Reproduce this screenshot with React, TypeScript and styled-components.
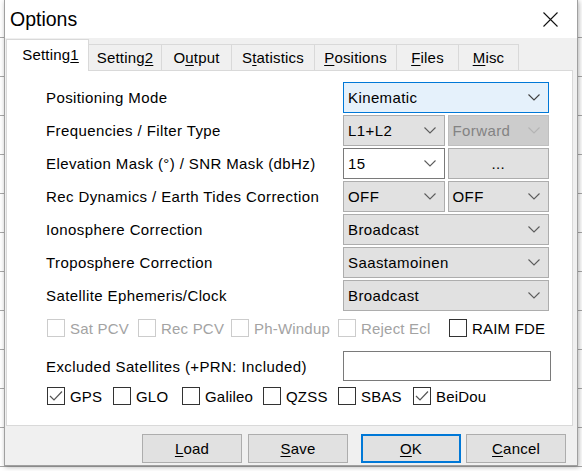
import React from "react";
import styled, { createGlobalStyle, css } from "styled-components";

const GlobalStyle = createGlobalStyle`
  html, body {
    margin: 0;
    padding: 0;
  }
  body {
    width: 582px;
    height: 471px;
    overflow: hidden;
    background: repeating-linear-gradient(to bottom, #ffffff 0 37px, #a8a8a8 37px 38px, #ffffff 38px 39px);
    font-family: "Liberation Sans", Arial, sans-serif;
    color: #000;
  }
`;

const Screen = styled.div`
  padding-left: 4px;
`;

const Dialog = styled.div`
  width: 574px;
  height: 466px;
  box-sizing: border-box;
  display: flex;
  flex-direction: column;
  background: #f0f0f0;
  border: 1px solid #a0a0a0;
  border-top: none;
  box-shadow: 1px 1px 5px rgba(0, 0, 0, 0.3);
`;

const TitleBar = styled.div`
  height: 38px;
  flex: none;
  display: flex;
  align-items: center;
  justify-content: space-between;
  padding: 0 19px 0 5px;
  background: #ffffff;
`;

const Title = styled.div`
  font-size: 19.5px;
`;

const Body = styled.div`
  flex: 1;
  display: flex;
  flex-direction: column;
  padding: 0 4px 0 1px;
  font-size: 15px;
  letter-spacing: 0.4px;
`;

const TabStrip = styled.div`
  height: 32px;
  flex: none;
  display: flex;
  align-items: flex-end;
  position: relative;
  z-index: 1;
  letter-spacing: 0.2px;
`;

const Tab = styled.div<{ $active?: boolean; $w: number }>`
  width: ${(p) => p.$w}px;
  height: 26px;
  box-sizing: border-box;
  display: flex;
  align-items: center;
  justify-content: center;
  background: #f0f0f0;
  border: 1px solid #d9d9d9;
  border-bottom: none;
  margin-left: -1px;
  ${(p) =>
    p.$active &&
    css`
      height: 32px;
      background: #ffffff;
      margin-bottom: -1px;
      margin-left: 0;
      padding-left: 6px;
      align-items: flex-start;
      padding-top: 6px;
    `}
`;

const Key = styled.span`
  text-decoration: underline;
  text-underline-offset: 2px;
`;

const Panel = styled.div`
  height: 356px;
  flex: none;
  box-sizing: border-box;
  background: #ffffff;
  border: 1px solid #d9d9d9;
  padding: 11px 0 0 39px;
  display: flex;
  flex-direction: column;
`;

const Rows = styled.div`
  display: flex;
  flex-direction: column;
  gap: 2px;
`;

const Row = styled.div<{ $h?: number; $top?: number }>`
  height: ${(p) => p.$h ?? 31}px;
  margin-top: ${(p) => p.$top ?? 0}px;
  display: flex;
  align-items: center;
`;

const Label = styled.div`
  width: 297px;
  white-space: nowrap;
`;

const Controls = styled.div`
  width: 206px;
  height: 100%;
  display: grid;
  grid-auto-flow: column;
  grid-auto-columns: 1fr;
  gap: 3px;
`;

type ComboKind = "focus" | "normal" | "disabled" | "edit";

const comboColors: Record<ComboKind, { bg: string; border: string; fg: string; arrow: string }> = {
  focus: { bg: "#e5f1fb", border: "#0078d7", fg: "#000", arrow: "#404040" },
  normal: { bg: "#e1e1e1", border: "#adadad", fg: "#000", arrow: "#5c5c5c" },
  disabled: { bg: "#cccccc", border: "#bfbfbf", fg: "#838383", arrow: "#b4b4b4" },
  edit: { bg: "#ffffff", border: "#7a7a7a", fg: "#000", arrow: "#5c5c5c" },
};

const ComboBox = styled.div<{ $kind: ComboKind }>`
  min-width: 0;
  box-sizing: border-box;
  display: flex;
  align-items: center;
  justify-content: space-between;
  padding: 0 8px 0 4px;
  background: ${(p) => comboColors[p.$kind].bg};
  border: 1px solid ${(p) => comboColors[p.$kind].border};
  color: ${(p) => comboColors[p.$kind].fg};
`;

const PushBox = styled.div`
  min-width: 0;
  box-sizing: border-box;
  display: flex;
  align-items: center;
  justify-content: center;
  background: #e1e1e1;
  border: 1px solid #adadad;
`;

const Chevron = ({ color }: { color: string }) => (
  <svg width="12" height="7" viewBox="0 0 12 7">
    <polyline points="0.5,0.5 6,6 11.5,0.5" fill="none" stroke={color} strokeWidth="1.1" />
  </svg>
);

const Combo = ({ kind = "normal", value }: { kind?: ComboKind; value: string }) => (
  <ComboBox $kind={kind}>
    <span>{value}</span>
    <Chevron color={comboColors[kind].arrow} />
  </ComboBox>
);

const CheckRow = styled.div<{ $cols: string; $top: number }>`
  display: grid;
  grid-template-columns: ${(p) => p.$cols};
  margin-top: ${(p) => p.$top}px;
  padding-left: 1px;
`;

const CheckItem = styled.div<{ $disabled?: boolean }>`
  display: flex;
  align-items: center;
  gap: 5px;
  white-space: nowrap;
  letter-spacing: 0.2px;
  color: ${(p) => (p.$disabled ? "#a3a3a3" : "#000")};
`;

const Box = styled.span<{ $disabled?: boolean }>`
  width: 18px;
  height: 18px;
  box-sizing: border-box;
  flex: none;
  display: flex;
  align-items: center;
  justify-content: center;
  background: #ffffff;
  border: 1px solid ${(p) => (p.$disabled ? "#cccccc" : "#333333")};
`;

const Check = ({ label, checked, disabled }: { label: string; checked?: boolean; disabled?: boolean }) => (
  <CheckItem $disabled={disabled}>
    <Box $disabled={disabled}>
      {checked && (
        <svg width="14" height="12" viewBox="0 0 14 12">
          <polyline points="1,6 5,10 13,1.5" fill="none" stroke="#555" strokeWidth="1.2" />
        </svg>
      )}
    </Box>
    {label}
  </CheckItem>
);

const TextInput = styled.div`
  width: 208px;
  height: 30px;
  box-sizing: border-box;
  background: #ffffff;
  border: 1px solid #7a7a7a;
`;

const Footer = styled.div`
  flex: 1;
  display: flex;
  justify-content: flex-end;
  align-items: flex-start;
  padding: 8px 7px 0 0;
  gap: 13px;
`;

const ButtonGroup = styled.div<{ $gap: number }>`
  display: flex;
  gap: ${(p) => p.$gap}px;
`;

const Button = styled.div<{ $default?: boolean }>`
  width: 100px;
  height: 29px;
  box-sizing: border-box;
  display: flex;
  align-items: center;
  justify-content: center;
  letter-spacing: 0.2px;
  background: #e1e1e1;
  border: 1px solid #adadad;
  ${(p) =>
    p.$default &&
    css`
      border: 2px solid #0078d7;
    `}
`;

const CloseIcon = () => (
  <svg width="15" height="15" viewBox="0 0 15 15">
    <path d="M0.5 0.5 L14.5 14.5 M14.5 0.5 L0.5 14.5" stroke="#111" strokeWidth="1.1" />
  </svg>
);

const App = () => {
  return (
    <Screen>
      <GlobalStyle />
      <Dialog>
        <TitleBar>
          <Title>Options</Title>
          <CloseIcon />
        </TitleBar>
        <Body>
          <TabStrip>
            <Tab $active $w={83}>
              <span>
                Setting<Key>1</Key>
              </span>
            </Tab>
            <Tab $w={74}>
              <span>
                Setting<Key>2</Key>
              </span>
            </Tab>
            <Tab $w={71}>
              <span>
                O<Key>u</Key>tput
              </span>
            </Tab>
            <Tab $w={84}>
              <span>
                S<Key>t</Key>atistics
              </span>
            </Tab>
            <Tab $w={83}>
              <span>
                <Key>P</Key>ositions
              </span>
            </Tab>
            <Tab $w={63}>
              <span>
                <Key>F</Key>iles
              </span>
            </Tab>
            <Tab $w={61}>
              <span>
                <Key>M</Key>isc
              </span>
            </Tab>
          </TabStrip>
          <Panel>
            <Rows>
              <Row>
                <Label>Positioning Mode</Label>
                <Controls>
                  <Combo kind="focus" value="Kinematic" />
                </Controls>
              </Row>
              <Row>
                <Label>Frequencies / Filter Type</Label>
                <Controls>
                  <Combo value="L1+L2" />
                  <Combo kind="disabled" value="Forward" />
                </Controls>
              </Row>
              <Row>
                <Label>Elevation Mask (°) / SNR Mask (dbHz)</Label>
                <Controls>
                  <Combo kind="edit" value="15" />
                  <PushBox>...</PushBox>
                </Controls>
              </Row>
              <Row>
                <Label>Rec Dynamics / Earth Tides Correction</Label>
                <Controls>
                  <Combo value="OFF" />
                  <Combo value="OFF" />
                </Controls>
              </Row>
              <Row>
                <Label>Ionosphere Correction</Label>
                <Controls>
                  <Combo value="Broadcast" />
                </Controls>
              </Row>
              <Row>
                <Label>Troposphere Correction</Label>
                <Controls>
                  <Combo value="Saastamoinen" />
                </Controls>
              </Row>
              <Row>
                <Label>Satellite Ephemeris/Clock</Label>
                <Controls>
                  <Combo value="Broadcast" />
                </Controls>
              </Row>
            </Rows>
            <CheckRow $cols="91px 93px 107px 111px auto" $top={8}>
              <Check label="Sat PCV" disabled />
              <Check label="Rec PCV" disabled />
              <Check label="Ph-Windup" disabled />
              <Check label="Reject Ecl" disabled />
              <Check label="RAIM FDE" />
            </CheckRow>
            <Row $h={30} $top={14}>
              <Label>Excluded Satellites (+PRN: Included)</Label>
              <TextInput />
            </Row>
            <CheckRow $cols="66px 69px 81px 75px 75px auto" $top={6}>
              <Check label="GPS" checked />
              <Check label="GLO" />
              <Check label="Galileo" />
              <Check label="QZSS" />
              <Check label="SBAS" />
              <Check label="BeiDou" checked />
            </CheckRow>
          </Panel>
          <Footer>
            <ButtonGroup $gap={6}>
              <Button>
                <span>
                  <Key>L</Key>oad
                </span>
              </Button>
              <Button>
                <span>
                  <Key>S</Key>ave
                </span>
              </Button>
            </ButtonGroup>
            <ButtonGroup $gap={5}>
              <Button $default>
                <span>
                  <Key>O</Key>K
                </span>
              </Button>
              <Button>
                <span>
                  <Key>C</Key>ancel
                </span>
              </Button>
            </ButtonGroup>
          </Footer>
        </Body>
      </Dialog>
    </Screen>
  );
};

export default App;
